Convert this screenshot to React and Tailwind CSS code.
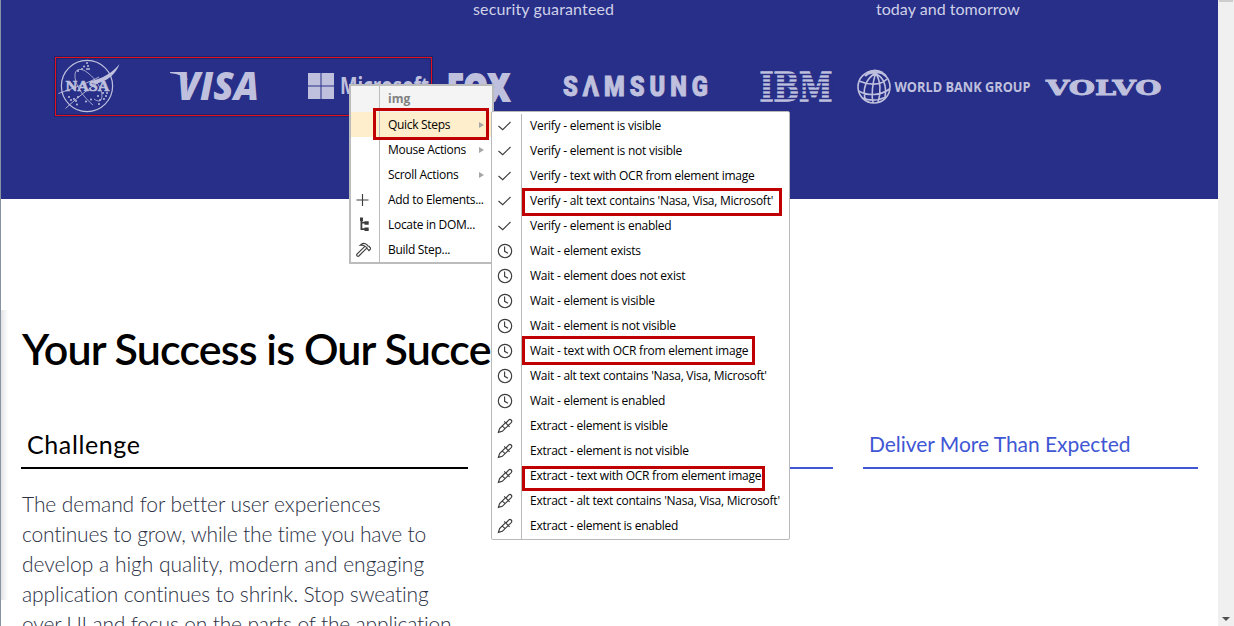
const QUICK_STEPS = [
  ["check", "Verify - element is visible"],
  ["check", "Verify - element is not visible"],
  ["check", "Verify - text with OCR from element image"],
  ["check", "Verify - alt text contains 'Nasa, Visa, Microsoft'"],
  ["check", "Verify - element is enabled"],
  ["clock", "Wait - element exists"],
  ["clock", "Wait - element does not exist"],
  ["clock", "Wait - element is visible"],
  ["clock", "Wait - element is not visible"],
  ["clock", "Wait - text with OCR from element image"],
  ["clock", "Wait - alt text contains 'Nasa, Visa, Microsoft'"],
  ["clock", "Wait - element is enabled"],
  ["dropper", "Extract - element is visible"],
  ["dropper", "Extract - element is not visible"],
  ["dropper", "Extract - text with OCR from element image"],
  ["dropper", "Extract - alt text contains 'Nasa, Visa, Microsoft'"],
  ["dropper", "Extract - element is enabled"],
];

const MENU = [
  { label: "Quick Steps", sub: true, active: true },
  { label: "Mouse Actions", sub: true },
  { label: "Scroll Actions", sub: true },
  { label: "Add to Elements...", icon: "plus" },
  { label: "Locate in DOM...", icon: "tree" },
  { label: "Build Step...", icon: "hammer" },
];

function Icon({ name }) {
  return (
    <svg width="16" height="16" viewBox="0 0 16 16" fill="none" stroke="#3c3c3c" strokeWidth="1.15">
      {name === "check" && <path d="M1.5 8 5.7 11.700 13.500 4" />}
      {name === "clock" && (
        <>
          <circle cx="8" cy="8" r="6.7" />
          <path d="M7.6 3.6V8.3L11 10.2" />
        </>
      )}
      {name === "dropper" && (
        <path d="M8.6 4.6 2.6 10.6 1.4 14.4 5.3 13.3 11.4 7.4M7.2 3.4l5.4 5.4M9 5l2.6-2.9c1.8-1.7 4.2.6 2.6 2.5L11.4 7.4M5.6 8.4l2.6 2.2" />
      )}
      {name === "plus" && <path d="M7.5 2v12M1.5 8h12" />}
      {name === "tree" && (
        <>
          <path d="M6.400 1.5v10.7h4M6.400 5.7h4" strokeWidth="1.8" />
          <path d="M5 2.300h3M9.500 6h4.200M9.500 12.2h4.200" strokeWidth="3.4" />
        </>
      )}
      {name === "hammer" && (
        <path d="M5.3 3.2C7.4 1 10.2 1.1 12.1 2.9L13 4l1 .3 1.900 2.300-1.9 2.1-1.900-2.100-.2-1L10.5 4.6C9 3.2 7.4 2.8 5.3 3.2ZM9.6 4.6 2 12.2c-.9 1.3.6 2.7 1.9 1.8L11.5 6.4" />
      )}
    </svg>
  );
}

function Mark({ width, className = "", children }) {
  return (
    <svg width={width} height="60" viewBox={`0 0 ${width} 60`} fill="#bfc0de" className={`shrink-0 overflow-visible ${className}`}>
      {children}
    </svg>
  );
}

function Nasa() {
  return (
    <Mark width={66}>
      <g fill="none" stroke="#bfc0de">
        <circle cx="31" cy="29" r="25.6" strokeWidth="1.2" />
        <path d="M37 48C27 40 18 27 19 17 20 11 26 11 32 16 40 22 46 32 46 39 46 45 42 45 38 42" strokeWidth="0.8" />
        <path d="M2.5 36.5C18 31 34 25 43 20M9.5 51.5C24 38 40 26 56 17" strokeWidth="0.9" />
      </g>
      <path d="M33 24.500C47 22 57 15 63.5 7 60 17 51 25 38 27Z" />
      <text x="9.500" y="34" fontFamily="Liberation Serif" fontWeight="700" fontSize="15.500" textLength="44" lengthAdjust="spacingAndGlyphs" stroke="#bfc0de" strokeWidth="0.6">NASA</text>
      {[[22, 14], [26, 12], [28, 9.5], [31, 6], [32, 9], [33, 12], [31, 12], [13, 40], [15, 43], [18, 42], [22, 40], [20, 44], [30, 44.5], [35, 42.5], [21, 47.5], [42, 39], [44, 43], [48, 42], [50, 39], [47, 36], [43, 47], [51, 36]].map(([x, y]) => (
        <circle key={`${x}-${y}`} cx={x} cy={y} r="1" />
      ))}
    </Mark>
  );
}

function Globe() {
  return (
    <g fill="none" stroke="#bfc0de" strokeWidth="1.6">
      <circle cx="17" cy="30" r="16" />
      <path d="M18.500 16C9 22 5 32 8.500 43M18.500 16C16 25 14 36 16 46M18.500 16C24 24 24 36 21 45M19 17c7 3 11 11 9 23M2 24c9 4 21 5 28-2M1.500 34c9 5 22 5 31-2M5 41c8 3 16 3 24-1" />
      <path d="M8 19c4-4 7-4 10-3 5-2 8 0 11 3M10 16c5-3 11-3 16 0" strokeWidth="2.2" />
    </g>
  );
}

function Hero() {
  return (
    <section className="h-[199px] shrink-0 overflow-hidden bg-[#272f88]">
      <div className="flex h-[57px] font-[Lato,sans-serif] text-[16px] leading-[18px] text-[#cfd1e8]">
        <p className="ml-[472px] w-[403px] tracking-[0.14px]">security guaranteed</p>
        <p className="tracking-[0.04px]">today and tomorrow</p>
      </div>
      <div className="ml-[54px] flex h-[60px]">
        <div className="flex h-[59px] w-[377px] shrink-0 border border-[#e3101f] shadow-[0_0_0_1px_#20246c,inset_0_0_0_1px_#20246c]">
          <div className="-mt-px flex">
            <Nasa />
            <Mark width={90} className="ml-[48px]">
              <text x="7" y="42.500" fontFamily="Open Sans" fontStyle="italic" fontWeight="800" fontSize="38" textLength="82" lengthAdjust="spacingAndGlyphs">VISA</text>
              <path d="M0 15h14l4 8C12 18 6 17 0 16Z" />
            </Mark>
            <Mark width={122} className="ml-[48px]">
              <path d="M0 16h12.500v12.500H0zM13.500 16H26v12.500H13.500zM0 29.500h12.500V42H0zM13.500 29.500H26V42H13.500z" />
              <text x="32" y="37" fontFamily="Open Sans" fontWeight="700" fontSize="22.500" textLength="89" lengthAdjust="spacingAndGlyphs">Microsoft</text>
            </Mark>
          </div>
        </div>
        <Mark width={62} className="ml-[18px]">
          <text x="-3" y="44" fontFamily="Open Sans" fontWeight="800" fontSize="37" textLength="63" lengthAdjust="spacingAndGlyphs" stroke="#bfc0de" strokeWidth="1.8">FOX</text>
        </Mark>
        <Mark width={146} className="ml-[51px]">
          <text x="0" y="39" fontFamily="Roboto" fontWeight="900" fontSize="28" letterSpacing="6" textLength="150" lengthAdjust="spacingAndGlyphs" stroke="#bfc0de" strokeWidth="1">SAMSUNG</text>
          <path d="M26 30.500h3l1.500 9.500h-6z" fill="#272f88" />
        </Mark>
        <Mark width={72} className="ml-[51px]">
          <text x="-0.500" y="44" fontFamily="DejaVu Serif" fontWeight="700" fontSize="40" textLength="73" lengthAdjust="spacingAndGlyphs" stroke="#bfc0de" strokeWidth="1.4">IBM</text>
          <path d="M-1 17.500h76M-1 21.500h76M-1 25.500h76M-1 29.500h76M-1 33.500h76M-1 37.500h76M-1 41.500h76" stroke="#272f88" strokeWidth="1.700" />
        </Mark>
        <Mark width={174} className="ml-[25px]">
          <Globe />
          <text x="37.500" y="35" fontFamily="Open Sans" fontWeight="700" fontSize="14" textLength="136" lengthAdjust="spacingAndGlyphs">WORLD BANK GROUP</text>
        </Mark>
        <Mark width={116} className="ml-[15px]">
          <text x="0" y="37.500" fontFamily="DejaVu Serif" fontWeight="700" fontSize="20.500" textLength="115.500" lengthAdjust="spacingAndGlyphs" stroke="#bfc0de" strokeWidth="0.900">VOLVO</text>
        </Mark>
      </div>
    </section>
  );
}

function ContextMenu() {
  return (
    <div className="absolute left-[349px] top-[84px] flex h-[180px] w-[145px] flex-col border-2 border-[#bcbcbc] bg-white">
      <div className="flex h-[26px] shrink-0 bg-[#f4f4f4]">
        <div className="w-[29px] border-r border-[#bcbcbc]" />
        <span className="pl-[8px] text-[12px] font-bold leading-[26px] text-[#808080]">img</span>
      </div>
      {MENU.map((item) => (
        <div key={item.label} className={`flex h-[25px] shrink-0 items-center ${item.active ? "bg-[#feeecb]" : ""}`}>
          <div className="flex h-full w-[29px] items-center border-r border-[#bcbcbc] pl-[4px]">
            {item.icon && <Icon name={item.icon} />}
          </div>
          <span className="flex-1 whitespace-nowrap pl-[8px] tracking-[-0.3px]">{item.label}</span>
          {item.sub && <span className="mr-[8px] h-0 w-0 border-y-[3.5px] border-l-[5px] border-y-transparent border-l-[#a6a6a6]" />}
        </div>
      ))}
    </div>
  );
}

function SubMenu() {
  return (
    <div className="absolute left-[491px] top-[111px] h-[429px] w-[299px] rounded-[2px] border border-[#b9b9b9] bg-white pt-[2px]">
      {QUICK_STEPS.map(([icon, label]) => (
        <div key={label} className="flex h-[25px] items-center">
          <div className="flex h-full w-[30px] items-center border-r border-[#b9b9b9] pb-[2px] pl-[5px]">
            <Icon name={icon} />
          </div>
          <span className="whitespace-nowrap pb-[2px] pl-[8px] tracking-[-0.25px]">{label}</span>
        </div>
      ))}
    </div>
  );
}

export default function App() {
  return (
    <div className="relative flex h-[626px] w-[1234px] overflow-hidden bg-white font-['Open_Sans',sans-serif] text-[12px] text-black">
      <div className="w-px shrink-0 bg-[#8793a0]" />
      <main className="flex w-[1217px] shrink-0 flex-col font-[Lato,sans-serif]">
        <Hero />
        <div className="flex flex-1">
          <div className="mt-[111px] h-[290px] w-[7px] shrink-0 bg-linear-to-r from-[#e2e3e6] to-white" />
          <div className="flex-1 pl-[13px]">
            <h1 className="mt-[122px] h-[58px] whitespace-nowrap pl-px text-[43px] font-semibold leading-[56px] tracking-[-0.87px]">Your Success is Our Succe</h1>
            <div className="mt-[48px] flex h-[42px] gap-[30px]">
              <div className="w-[447px] border-b-2 border-black pl-[6px] text-[25px] leading-[34px] tracking-[0.6px]">Challenge</div>
              <div className="w-[335px] border-b-2 border-[#3f57d4]" />
              <div className="w-[335px] border-b-2 border-[#3f57d4] pl-[6px] text-[21px] leading-[34px] tracking-[-0.04px] text-[#3f57d4]">Deliver More Than Expected</div>
            </div>
            <p className="mt-[20px] h-[137px] overflow-hidden whitespace-nowrap pl-px text-[21px] font-light leading-[30px] tracking-[-0.14px] text-[#2b3044]">
              <span className="tracking-[-0.08px]">The demand for better user experiences</span><br />
              <span className="tracking-[-0.2px]">continues to grow, while the time you have to</span><br />
              <span className="tracking-[-0.02px]">develop a high quality, modern and engaging</span><br />
              application continues to shrink. Stop sweating<br />
              <span className="tracking-[-0.17px]">over UI and focus on the parts of the application</span>
            </p>
          </div>
        </div>
      </main>
      <div className="flex w-[16px] shrink-0 flex-col items-center justify-between bg-[#f0f0f0] pb-[5px]">
        <span className="h-[2px] w-[14px] bg-[#cdcdcd]" />
        <span className="h-0 w-0 border-x-[4px] border-t-[4px] border-x-transparent border-t-[#505050]" />
      </div>
      <ContextMenu />
      <SubMenu />
      <div className="absolute left-[373px] top-[108px] h-[32px] w-[116px] border-3 border-[#c00000]" />
      <div className="absolute left-[522px] top-[188px] h-[28px] w-[260px] border-3 border-[#c00000]" />
      <div className="absolute left-[522px] top-[336px] h-[29px] w-[233px] border-3 border-[#c00000]" />
      <div className="absolute left-[522px] top-[466px] h-[25px] w-[243px] border-3 border-[#c00000]" />
    </div>
  );
}
